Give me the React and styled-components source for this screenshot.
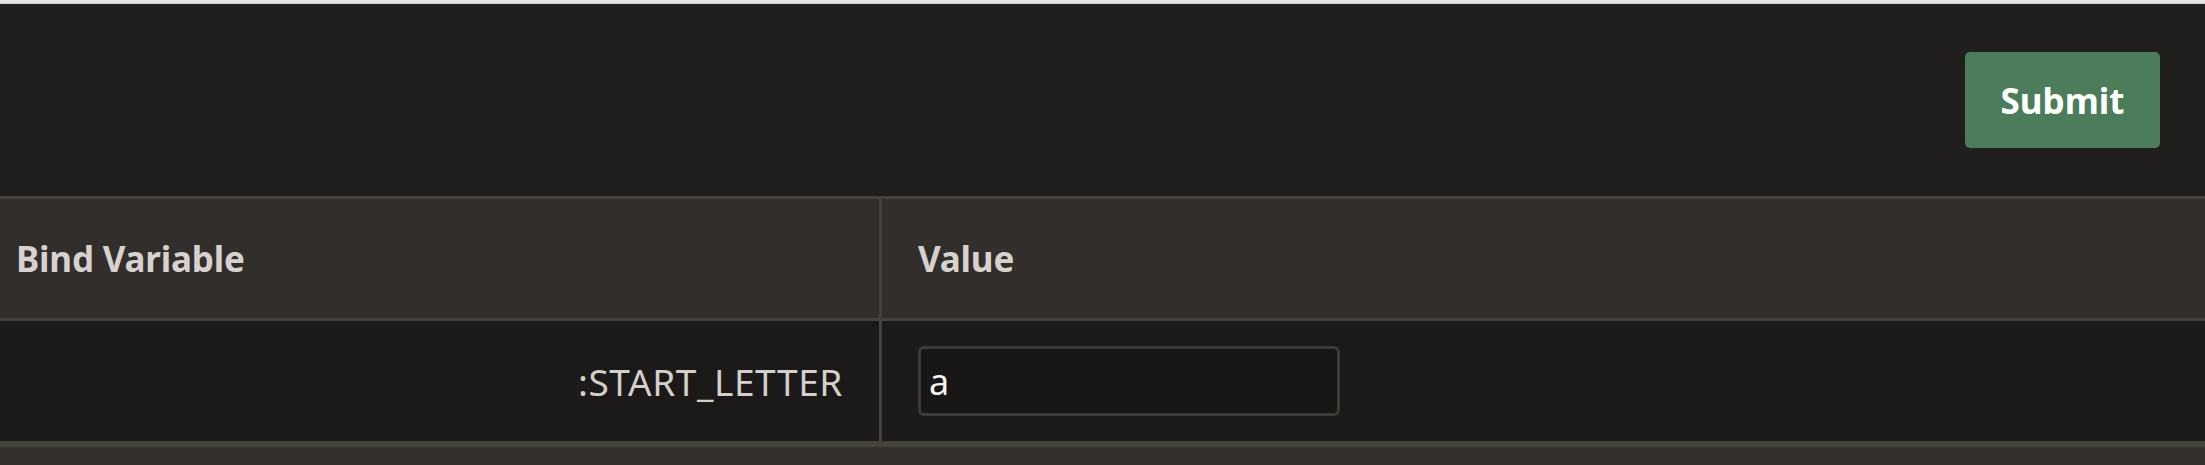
import React from "react";
import styled, { createGlobalStyle } from "styled-components";

const GlobalStyle = createGlobalStyle`
  html, body {
    margin: 0;
    padding: 0;
    background: #201f1d;
    font-family: "Noto Sans", "Open Sans", sans-serif;
  }
  * { box-sizing: border-box; }
`;

const Page = styled.div`
  display: flex;
  flex-direction: column;
  min-height: 465px;
  background: #201f1d;
`;

const TopStrip = styled.div`
  height: 4px;
  background: #e4e4e4;
  border-bottom: 1px solid #cfcfcf;
`;

const Toolbar = styled.div`
  display: flex;
  justify-content: flex-end;
  align-items: center;
  padding: 48px 45px 48px 0;
`;

const SubmitButton = styled.button`
  width: 195px;
  height: 96px;
  border: none;
  border-radius: 5px;
  background: #4b7d5a;
  color: #ffffff;
  font-family: "Noto Sans", sans-serif;
  font-weight: 700;
  font-size: 35px;
  cursor: pointer;
`;

const Table = styled.div`
  display: flex;
  flex-direction: column;
  flex: 1;
  border-top: 3px solid #45413c;
`;

const Row = styled.div`
  display: grid;
  grid-template-columns: 882px 1fr;
  height: ${(p) => (p.$header ? "122px" : "126px")};
  background: ${(p) => (p.$header ? "#322e2b" : "#1b1a18")};
  border-bottom: ${(p) => (p.$header ? "3px" : "6px")} solid #45413c;
`;

const Cell = styled.div`
  display: flex;
  align-items: center;
  justify-content: ${(p) => (p.$right ? "flex-end" : "flex-start")};
  padding: 0 ${(p) => p.$padRight ?? 36}px 0 ${(p) => p.$padLeft ?? 36}px;
  border-right: ${(p) => (p.$divider ? "3px solid #45413c" : "none")};
  color: ${(p) => (p.$header ? "#d5d2cf" : "#d3cfcb")};
  font-weight: ${(p) => (p.$header ? 700 : 400)};
  font-size: ${(p) => (p.$header ? "35px" : "37px")};
  letter-spacing: ${(p) => (p.$header ? "-0.2px" : "0.6px")};
  white-space: nowrap;
`;

const ValueInput = styled.input`
  width: 422px;
  height: 70px;
  border: 3px solid #3e3b37;
  border-radius: 6px;
  background: #181715;
  color: #f4f4f4;
  font-family: "Noto Sans", sans-serif;
  font-size: 36px;
  padding: 0 8px;
  outline: none;
`;

const Footer = styled.div`
  flex: 1;
  background: #33302c;
`;

export default function App() {
  return (
    <Page>
      <GlobalStyle />
      <TopStrip />
      <Toolbar>
        <SubmitButton>Submit</SubmitButton>
      </Toolbar>
      <Table>
        <Row $header>
          <Cell $header $divider $padLeft={16}>Bind Variable</Cell>
          <Cell $header>Value</Cell>
        </Row>
        <Row>
          <Cell $divider $right>:START_LETTER</Cell>
          <Cell>
            <ValueInput defaultValue="a" />
          </Cell>
        </Row>
        <Footer />
      </Table>
    </Page>
  );
}
